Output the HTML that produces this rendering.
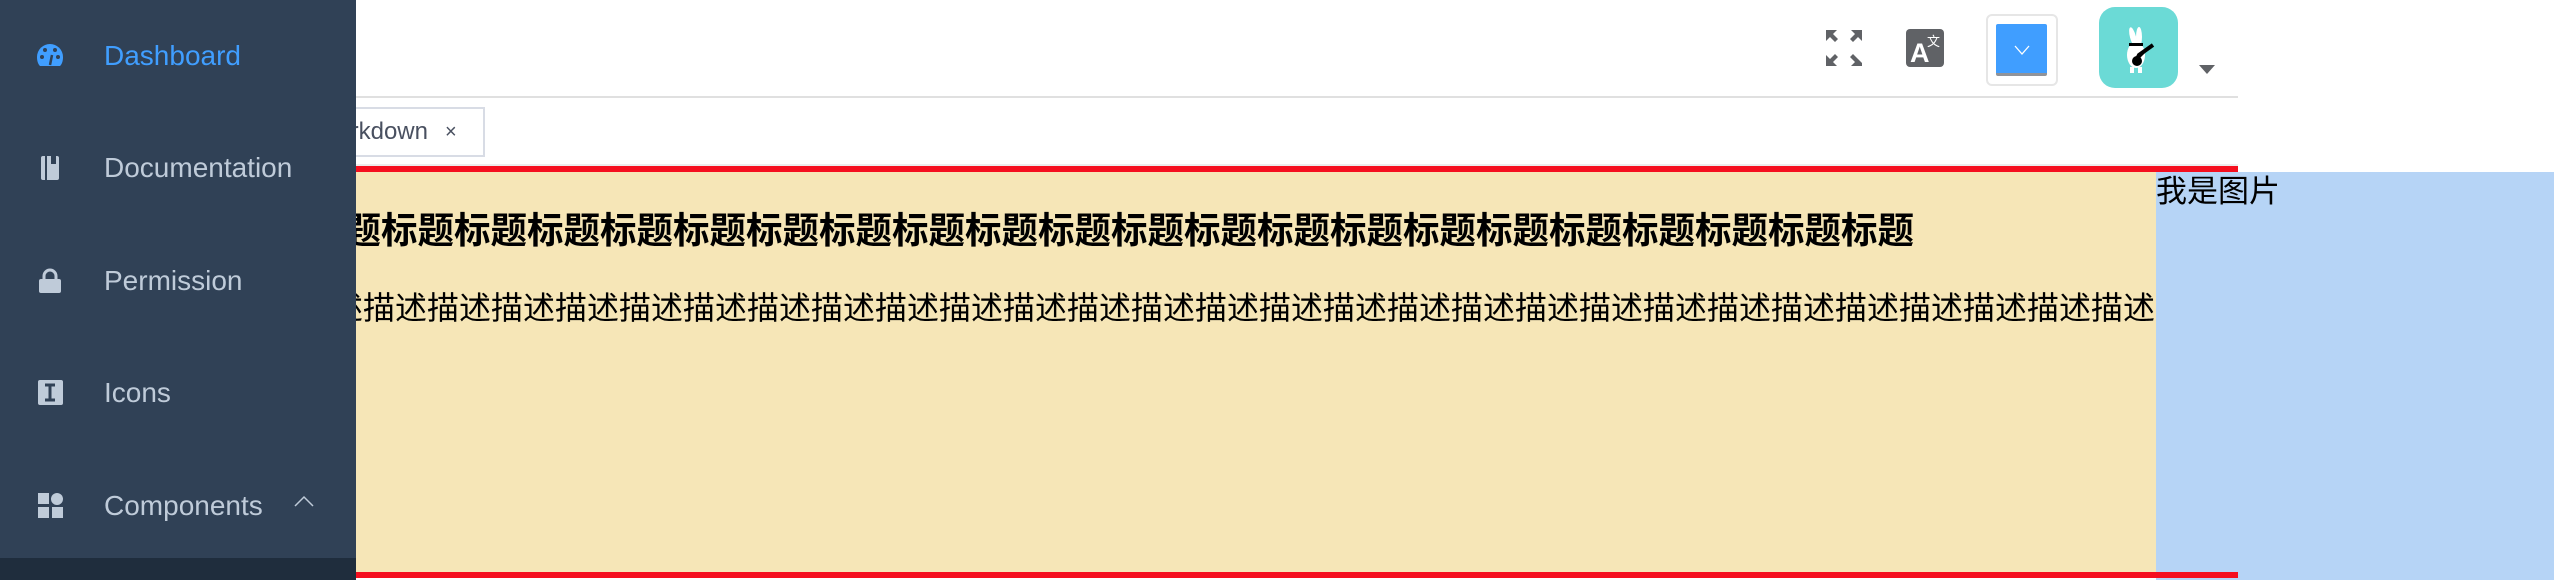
<!DOCTYPE html>
<html><head><meta charset="utf-8"><style>
*{margin:0;padding:0;box-sizing:border-box}
html,body{width:2554px;height:580px;overflow:hidden;background:#fff;font-family:"Liberation Sans","Noto Sans CJK SC",sans-serif;position:relative}
.abs{position:absolute}
#side{left:0;top:0;width:356px;height:580px;background:#304156;z-index:5}
#side .dark{position:absolute;left:0;top:558px;width:356px;height:22px;background:#1f2d3d}
.mi{position:absolute;left:104px;font-size:28px;color:#bfcbd9;line-height:32px;transform:translateY(-16px)}
.ic{position:absolute;left:36px;width:28px;height:28px;transform:translateY(-14px)}
.nw{white-space:nowrap}
</style></head><body>
<div id="side" class="abs">
 <svg class="ic" style="top:56px" viewBox="0 0 28 28"><path d="M14 2A13 13 0 0 0 1 15c0 4 1 7 3 9h20c2-2 3-5 3-9A13 13 0 0 0 14 2z" fill="#409eff"/><circle cx="6" cy="15" r="2" fill="#304156"/><circle cx="9" cy="8" r="2" fill="#304156"/><circle cx="19" cy="8" r="2" fill="#304156"/><circle cx="22" cy="15" r="2" fill="#304156"/><path d="M14 23l2-10" stroke="#304156" stroke-width="2.5"/></svg>
 <div class="mi" style="top:56px;color:#409eff">Dashboard</div>
 <svg class="ic" style="top:168px" viewBox="0 0 28 28"><rect x="5" y="2" width="18" height="24" rx="2" fill="#bfcbd9"/><rect x="9" y="2" width="2" height="24" fill="#304156"/><rect x="15" y="2" width="5" height="8" fill="#304156"/></svg>
 <div class="mi" style="top:168px">Documentation</div>
 <svg class="ic" style="top:281px" viewBox="0 0 28 28"><path d="M8 13V9a6 6 0 0 1 12 0v4" fill="none" stroke="#bfcbd9" stroke-width="3"/><rect x="3" y="12" width="22" height="14" rx="2" fill="#bfcbd9"/></svg>
 <div class="mi" style="top:281px">Permission</div>
 <svg class="ic" style="top:393px" viewBox="0 0 28 28"><rect x="2" y="1" width="25" height="25" rx="2" fill="#bfcbd9"/><path d="M9 6h10M9 21h10M14 6v15" stroke="#304156" stroke-width="3"/></svg>
 <div class="mi" style="top:393px">Icons</div>
 <svg class="ic" style="top:506px" viewBox="0 0 28 28"><rect x="2" y="1" width="11" height="11" fill="#bfcbd9"/><circle cx="21" cy="7" r="6" fill="#bfcbd9"/><rect x="2" y="15" width="11" height="11" fill="#bfcbd9"/><rect x="16" y="15" width="11" height="11" fill="#bfcbd9"/></svg>
 <div class="mi" style="top:506px">Components</div>
 <svg class="abs" style="left:293px;top:494px" width="22" height="14" viewBox="0 0 22 14"><path d="M2 12l9-9 9 9" fill="none" stroke="#bfcbd9" stroke-width="1.5"/></svg>
 <div class="dark"></div>
</div>

<svg class="abs" style="left:1826px;top:30px" width="36" height="36" viewBox="0 0 36 36" fill="#606266"><path d="M0 0h11l-4 4 5 5-3 3-5-5-4 4z"/><path d="M36 0H25l4 4-5 5 3 3 5-5 4 4z"/><path d="M0 36h11l-4-4 5-5-3-3-5 5-4-4z"/><path d="M36 36H25l4-4-5-5 3-3 5 5 4 4z"/></svg>
<svg class="abs" style="left:1906px;top:29px" width="38" height="38" viewBox="0 0 38 38"><rect width="38" height="38" rx="4" fill="#606266"/><text x="4" y="33" font-family="Liberation Sans" font-weight="bold" font-size="27" fill="#fff">A</text><text x="21" y="17" font-family="Noto Sans CJK SC" font-size="13" fill="#fff">文</text></svg>
<div class="abs" style="left:1986px;top:14px;width:72px;height:72px;border:2px solid #e6e6e6;border-radius:6px"></div>
<div class="abs" style="left:1996px;top:24px;width:51px;height:52px;background:#409eff;border-bottom:3px solid #909399;border-radius:2px"></div>
<svg class="abs" style="left:2013px;top:44px" width="18" height="12" viewBox="0 0 18 12"><path d="M2 2l7 8 7-8" fill="none" stroke="#fff" stroke-width="1.3"/></svg>
<div class="abs" style="left:2099px;top:7px;width:79px;height:81px;background:#6bdad6;border-radius:16px"></div>
<svg class="abs" style="left:2115px;top:25px" width="50" height="50" viewBox="0 0 50 50"><ellipse cx="18" cy="12" rx="3" ry="10" fill="#fff" transform="rotate(-15 18 12)"/><ellipse cx="24" cy="12" rx="3" ry="10" fill="#fff"/><ellipse cx="21" cy="30" rx="9" ry="13" fill="#fff"/><rect x="14" y="18" width="14" height="3" fill="#000"/><path d="M20 38l4-8 14-10" stroke="#000" stroke-width="4"/><circle cx="22" cy="36" r="5" fill="#000"/><rect x="15" y="42" width="4" height="6" fill="#fff"/><rect x="23" y="42" width="4" height="6" fill="#fff"/></svg>
<svg class="abs" style="left:2199px;top:65px" width="16" height="9" viewBox="0 0 16 9"><path d="M0 0h16L8 9z" fill="#606266"/></svg>

<div class="abs" style="left:356px;top:96px;width:1882px;height:70px;border-top:2px solid #e0e0e0;border-bottom:2px solid #ececec;background:#fff"></div>
<div class="abs" style="left:300px;top:107px;width:185px;height:50px;border:2px solid #d8dce5;background:#fff"></div>
<div class="abs nw" style="right:2126px;top:118px;font-size:24px;color:#495060;line-height:28px">Markdown</div>
<div class="abs" style="left:445px;top:118px;font-size:20px;color:#495060;line-height:28px">×</div>

<div class="abs" style="left:356px;top:166px;width:1882px;height:6px;background:#f50f1f"></div>
<div class="abs" style="left:356px;top:172px;width:1800px;height:400px;background:#f6e6b7"></div>
<div class="abs" style="left:2156px;top:172px;width:398px;height:408px;background:#b6d4f6"></div>
<div class="abs" style="left:356px;top:572px;width:1882px;height:6px;background:#f50f1f;z-index:2"></div>
<div class="abs nw" style="left:2156px;top:172px;font-size:31px;line-height:40px;color:#000">我是图片</div>
<div class="abs nw" style="right:640px;top:208px;font-size:36.5px;font-weight:bold;line-height:46px;color:#000">标题标题标题标题标题标题标题标题标题标题标题标题标题标题标题标题标题标题标题标题标题标题</div>
<div class="abs nw" style="right:399px;top:288px;font-size:32px;line-height:40px;color:#000">描述描述描述描述描述描述描述描述描述描述描述描述描述描述描述描述描述描述描述描述描述描述描述描述描述描述描述描述描述</div>
</body></html>
